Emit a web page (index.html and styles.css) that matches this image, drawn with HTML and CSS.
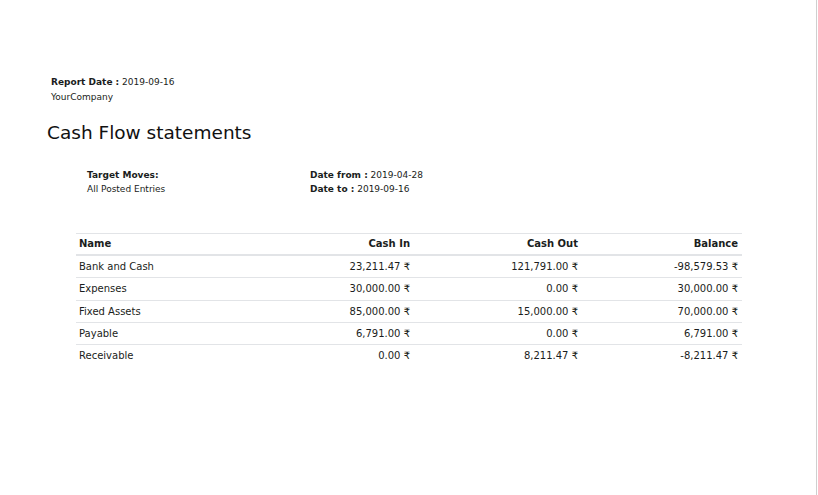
FILE: index.html
```html
<!DOCTYPE html>
<html>
<head>
<meta charset="utf-8">
<link rel="stylesheet" href="styles.css">
</head>
<body>
<div class="page">
  <div class="header">
    <div class="line"><b>Report Date :</b> 2019-09-16</div>
    <div class="line">YourCompany</div>
  </div>
  <h2 class="title">Cash Flow statements</h2>
  <div class="info">
    <div class="info-col">
      <div><b>Target Moves:</b></div>
      <div>All Posted Entries</div>
    </div>
    <div class="info-col">
      <div><b>Date from :</b> 2019-04-28</div>
      <div><b>Date to :</b> 2019-09-16</div>
    </div>
  </div>
  <table class="report">
    <thead>
      <tr><th class="c-name">Name</th><th class="c-in num">Cash In</th><th class="c-out num">Cash Out</th><th class="c-bal num">Balance</th></tr>
    </thead>
    <tbody>
      <tr><td>Bank and Cash</td><td class="num">23,211.47 ₹</td><td class="num">121,791.00 ₹</td><td class="num">-98,579.53 ₹</td></tr>
      <tr><td>Expenses</td><td class="num">30,000.00 ₹</td><td class="num">0.00 ₹</td><td class="num">30,000.00 ₹</td></tr>
      <tr><td>Fixed Assets</td><td class="num">85,000.00 ₹</td><td class="num">15,000.00 ₹</td><td class="num">70,000.00 ₹</td></tr>
      <tr><td>Payable</td><td class="num">6,791.00 ₹</td><td class="num">0.00 ₹</td><td class="num">6,791.00 ₹</td></tr>
      <tr><td>Receivable</td><td class="num">0.00 ₹</td><td class="num">8,211.47 ₹</td><td class="num">-8,211.47 ₹</td></tr>
    </tbody>
  </table>
</div>
</body>
</html>
```

FILE: styles.css
```css
html, body {
  margin: 0;
  padding: 0;
  background: #fff;
}
body {
  font-family: "DejaVu Sans", sans-serif;
  color: #1a1d20;
}
.page {
  width: 817px;
  height: 495px;
  border-right: 1px solid #cfcfcf;
  box-sizing: border-box;
  padding-top: 75px;
  overflow: hidden;
}
.header {
  padding-left: 51px;
  font-size: 9px;
  line-height: 15px;
}
.title {
  margin: 17px 0 0 47px;
  font-size: 18.5px;
  font-weight: normal;
  line-height: 22px;
  color: #111;
}
.info {
  display: flex;
  margin: 24px 0 0 87px;
  font-size: 9px;
  line-height: 14px;
}
.info-col {
  width: 223px;
}
.report {
  margin: 37px 0 0 76px;
  width: 666px;
  table-layout: fixed;
  border-collapse: collapse;
  font-size: 10px;
}
.report th, .report td {
  padding: 4px 4px 4px 3px;
  text-align: left;
  border-top: 1px solid #e2e4e7;
  line-height: 13px;
}
.report tbody td {
  padding-top: 4.2px;
  padding-bottom: 4.1px;
}
.report th {
  padding-top: 3px;
  border-bottom: 2px solid #e2e4e7;
}
.report .num {
  text-align: right;
}
.c-name { width: 163px; }
.c-in { width: 161px; }
.c-out { width: 161px; }
.c-bal { width: 153px; }
```
